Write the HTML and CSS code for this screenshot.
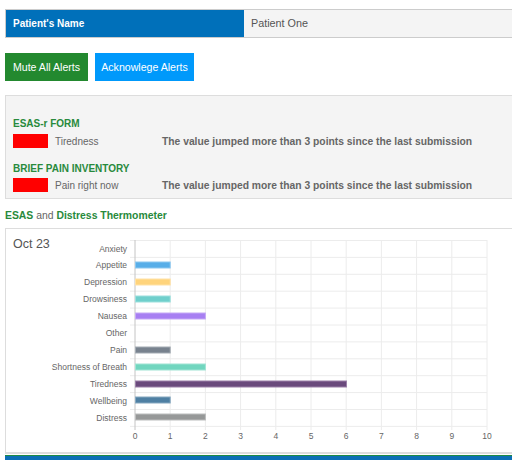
FILE: index.html
```html
<!DOCTYPE html>
<html>
<head>
<meta charset="utf-8">
<link rel="stylesheet" href="styles.css">
</head>
<body>
<div class="page">
  <div class="patient-row">
    <div class="patient-label">Patient's Name</div>
    <div class="patient-value">Patient One</div>
  </div>

  <div class="actions">
    <button class="btn btn-green">Mute All Alerts</button>
    <button class="btn btn-blue">Acknowlege Alerts</button>
  </div>

  <div class="alerts">
    <div class="alert-title">ESAS-r FORM</div>
    <div class="alert-row">
      <span class="swatch"></span>
      <span class="alert-label">Tiredness</span>
      <span class="alert-msg">The value jumped more than 3 points since the last submission</span>
    </div>
    <div class="alert-title second">BRIEF PAIN INVENTORY</div>
    <div class="alert-row">
      <span class="swatch"></span>
      <span class="alert-label">Pain right now</span>
      <span class="alert-msg">The value jumped more than 3 points since the last submission</span>
    </div>
  </div>

  <div class="section-title"><b>ESAS</b> and <b>Distress Thermometer</b></div>

  <div class="chart-box">
    <div class="chart-date">Oct 23</div>
    <svg class="chart" width="446" height="223" viewBox="0 0 446 223">
      <g class="grid">
        <line x1="104.2" y1="11" x2="104.2" y2="201"/>
        <line x1="139.4" y1="11" x2="139.4" y2="201"/>
        <line x1="174.6" y1="11" x2="174.6" y2="201"/>
        <line x1="209.8" y1="11" x2="209.8" y2="201"/>
        <line x1="245" y1="11" x2="245" y2="201"/>
        <line x1="280.2" y1="11" x2="280.2" y2="201"/>
        <line x1="315.4" y1="11" x2="315.4" y2="201"/>
        <line x1="350.6" y1="11" x2="350.6" y2="201"/>
        <line x1="385.8" y1="11" x2="385.8" y2="201"/>
        <line x1="421" y1="11" x2="421" y2="201"/>
        <line x1="64" y1="11.5" x2="421" y2="11.5"/>
        <line x1="64" y1="28.4" x2="421" y2="28.4"/>
        <line x1="64" y1="45.3" x2="421" y2="45.3"/>
        <line x1="64" y1="62.2" x2="421" y2="62.2"/>
        <line x1="64" y1="79.1" x2="421" y2="79.1"/>
        <line x1="64" y1="96" x2="421" y2="96"/>
        <line x1="64" y1="112.9" x2="421" y2="112.9"/>
        <line x1="64" y1="129.8" x2="421" y2="129.8"/>
        <line x1="64" y1="146.7" x2="421" y2="146.7"/>
        <line x1="64" y1="163.6" x2="421" y2="163.6"/>
        <line x1="64" y1="180.5" x2="421" y2="180.5"/>
        <line x1="64" y1="197.4" x2="421" y2="197.4"/>
      </g>
      <line class="zero" x1="69" y1="11" x2="69" y2="201"/>
      <g class="bars">
        <rect x="69.5" y="33" width="34.7" height="6" fill="#58aee8" stroke="#8cc8f0"/>
        <rect x="69.5" y="50" width="34.7" height="6" fill="#ffd47c" stroke="#ffe2a6"/>
        <rect x="69.5" y="67" width="34.7" height="6" fill="#6fcfcc" stroke="#9de0dd"/>
        <rect x="69.5" y="84" width="69.9" height="6" fill="#a77ff2" stroke="#c5a9f6"/>
        <rect x="69.5" y="118" width="34.7" height="6" fill="#78828e" stroke="#a3abb3"/>
        <rect x="69.5" y="135" width="69.9" height="6" fill="#71d6bf" stroke="#a0e4d4"/>
        <rect x="69.5" y="152" width="211" height="6" fill="#6a4a7c" stroke="#9b80a8"/>
        <rect x="69.5" y="168" width="34.7" height="6" fill="#4f80a3" stroke="#86a8c0"/>
        <rect x="69.5" y="185" width="69.9" height="6" fill="#969898" stroke="#bcbdbd"/>
      </g>
      <g class="ylabels">
        <text x="61" y="22.5">Anxiety</text>
        <text x="61" y="39.4">Appetite</text>
        <text x="61" y="56.3">Depression</text>
        <text x="61" y="73.2">Drowsiness</text>
        <text x="61" y="90.1">Nausea</text>
        <text x="61" y="107">Other</text>
        <text x="61" y="123.9">Pain</text>
        <text x="61" y="140.8">Shortness of Breath</text>
        <text x="61" y="157.7">Tiredness</text>
        <text x="61" y="174.6">Wellbeing</text>
        <text x="61" y="191.5">Distress</text>
      </g>
      <g class="xlabels">
        <text x="69" y="210">0</text>
        <text x="104.2" y="210">1</text>
        <text x="139.4" y="210">2</text>
        <text x="174.6" y="210">3</text>
        <text x="209.8" y="210">4</text>
        <text x="245" y="210">5</text>
        <text x="280.2" y="210">6</text>
        <text x="315.4" y="210">7</text>
        <text x="350.6" y="210">8</text>
        <text x="385.8" y="210">9</text>
        <text x="421" y="210">10</text>
      </g>
    </svg>
  </div>

  <div class="footer"></div>
</div>
</body>
</html>
```

FILE: styles.css
```css
html, body {
  margin: 0;
  padding: 0;
  background: #fff;
  overflow: hidden;
}

body {
  font-family: "Liberation Sans", Arial, sans-serif;
  color: #666;
}

.page {
  width: 540px;
  padding: 9px 0 0 5px;
}

.patient-row {
  display: flex;
  height: 27px;
  border: 1px solid #ccc;
  border-right: none;
  background: #f4f4f4;
}

.patient-label {
  width: 238px;
  background: #0070ba;
  color: #fff;
  font-size: 10px;
  font-weight: bold;
  line-height: 27px;
  padding-left: 7px;
  box-sizing: border-box;
}

.patient-value {
  color: #555;
  font-size: 10.8px;
  line-height: 27px;
  padding-left: 7px;
}

.actions {
  display: flex;
  gap: 7px;
  margin-top: 15px;
}

.btn {
  border: none;
  margin: 0;
  height: 28px;
  padding: 0;
  color: #fff;
  font-family: "Liberation Sans", Arial, sans-serif;
  font-size: 10.6px;
  line-height: 28px;
  white-space: nowrap;
  text-align: center;
  cursor: pointer;
}

.btn-green {
  background: #23892f;
  width: 83px;
}

.btn-blue {
  background: #0099fb;
  width: 99px;
}

.alerts {
  margin-top: 14px;
  border: 1px solid #ddd;
  border-right: none;
  background: #f4f4f4;
  padding: 21px 0 6px 7px;
}

.alert-title {
  color: #288a3c;
  font-weight: bold;
  font-size: 10px;
  line-height: 14px;
  margin-bottom: 3px;
}

.alert-title.second {
  margin-top: 14px;
  margin-bottom: 2px;
}

.alert-row {
  display: flex;
  align-items: center;
  height: 14px;
  font-size: 10px;
}

.swatch {
  width: 35px;
  height: 14px;
  background: #ff0000;
  flex: none;
}

.alert-label {
  width: 107px;
  margin-left: 7px;
  flex: none;
}

.alert-msg {
  font-weight: bold;
  font-size: 10.3px;
  white-space: nowrap;
}

.section-title {
  margin-top: 9px;
  font-size: 10.4px;
  line-height: 15px;
  color: #666;
}

.section-title b {
  color: #288a3c;
}

.chart-box {
  margin-top: 5px;
  display: flex;
  border: 1px solid #ddd;
  border-right: none;
  border-bottom-width: 2px;
}

.chart-date {
  width: 60px;
  flex: none;
  box-sizing: border-box;
  padding: 8px 0 0 7px;
  font-size: 12.5px;
  line-height: 15px;
  color: #555;
}

.chart {
  display: block;
  overflow: visible;
}

.grid line {
  stroke: #ececec;
  stroke-width: 1;
}

.zero {
  stroke: #c4c4c4;
  stroke-width: 1;
}

.bars rect {
  stroke-width: 1;
}

.ylabels text {
  font-family: "Liberation Sans", Arial, sans-serif;
  font-size: 8.5px;
  fill: #666;
  text-anchor: end;
}

.xlabels text {
  font-family: "Liberation Sans", Arial, sans-serif;
  font-size: 8.5px;
  fill: #666;
  text-anchor: middle;
}

.footer {
  margin-top: 1px;
  height: 4px;
  border-top: 1px solid #1f8a45;
  background: #0b6fb5;
}
```
